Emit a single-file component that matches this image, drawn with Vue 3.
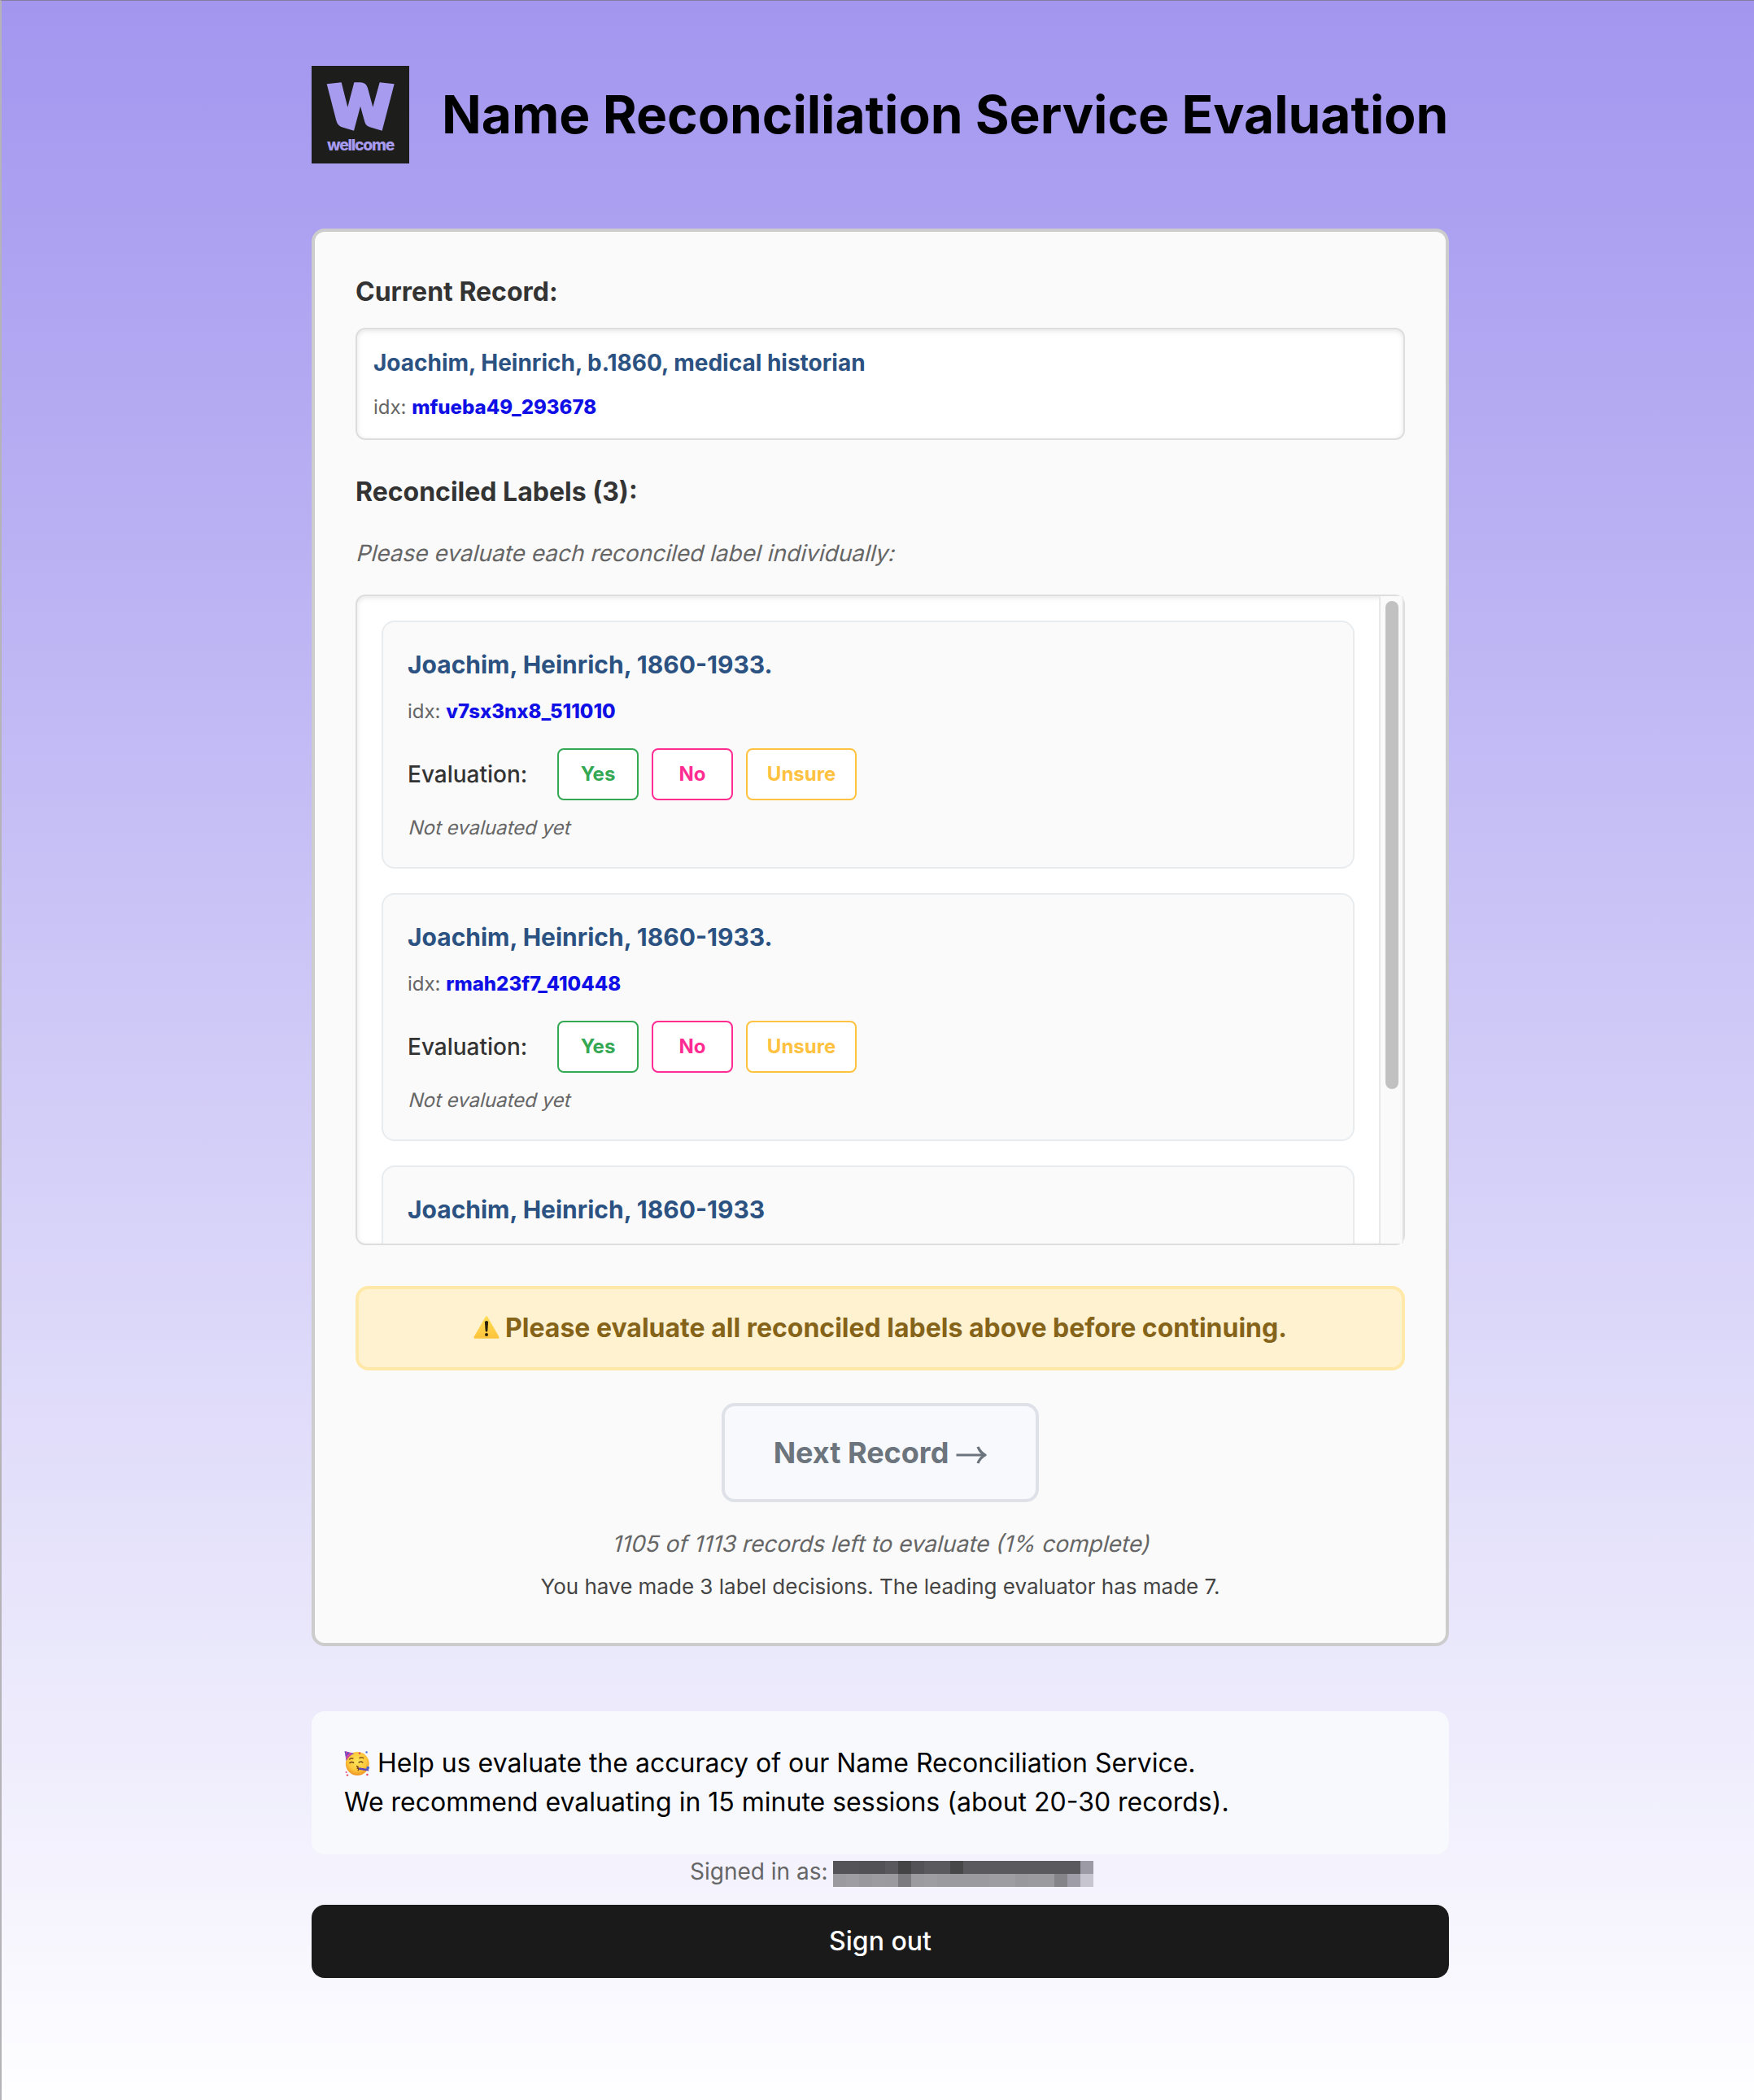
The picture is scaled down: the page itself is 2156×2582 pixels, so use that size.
<script setup>
const record = {
  label: 'Joachim, Heinrich, b.1860, medical historian',
  idx: 'mfueba49_293678',
}

const labels = [
  { label: 'Joachim, Heinrich, 1860-1933.', idx: 'v7sx3nx8_511010' },
  { label: 'Joachim, Heinrich, 1860-1933.', idx: 'rmah23f7_410448' },
  { label: 'Joachim, Heinrich, 1860-1933', idx: '' },
]

const maskTop = [
  '#545358', '#545358', '#525156', '#525156', '#59585d', '#444346', '#535257', '#5a595e', '#5a595e', '#474648',
  '#5a595e', '#5a595e', '#5a595e', '#5a595e', '#5a595e', '#5a595e', '#5a595e', '#5a595e', '#5a595e', '#9c9aa4',
]
const maskBottom = [
  '#9b9a9f', '#9e9da2', '#99989d', '#9c9ba0', '#9b9a9f', '#7c7b80', '#9c9ba0', '#9e9da2', '#9b9a9f', '#9b9a9f',
  '#9b9a9f', '#9b9a9f', '#9e9da2', '#9e9da2', '#99989d', '#9b9a9f', '#9b9a9f', '#858488', '#9f9da8', '#c7c5d0',
]
const mask = [...maskTop, ...maskBottom]
</script>

<template>
  <div class="page">
    <header class="header">
      <svg class="logo" viewBox="39 63 360 360" role="img" aria-label="Wellcome">
        <rect x="39" y="63" width="360" height="360" fill="#1d1d1b" />
        <path
          fill="#a79bf0"
          d="M95 130 L149 124 L172 215 L196 124 H216 Q240 123 246 145 L265 215 L290 124 L344 130 L299 302 L254 289 Q239 284 235 270 L219 212 L195 302 L148 288 Q135 283 130 265 Z"
        />
        <text class="logo-text" x="96" y="374" textLength="250">wellcome</text>
      </svg>
      <h1 class="title">Name Reconciliation Service Evaluation</h1>
    </header>

    <main class="card">
      <h2 class="heading">Current Record:</h2>
      <div class="record">
        <div class="record-label">{{ record.label }}</div>
        <div class="idx">idx: <a>{{ record.idx }}</a></div>
      </div>

      <h2 class="heading labels-heading">Reconciled Labels (3):</h2>
      <p class="hint">Please evaluate each reconciled label individually:</p>

      <div class="list">
        <div class="list-items">
          <article v-for="(item, i) in labels" :key="i" class="item">
            <div class="item-label">{{ item.label }}</div>
            <template v-if="item.idx">
              <div class="idx">idx: <a>{{ item.idx }}</a></div>
              <div class="evaluation">
                <span class="evaluation-name">Evaluation:</span>
                <button class="choice yes">Yes</button>
                <button class="choice no">No</button>
                <button class="choice unsure">Unsure</button>
              </div>
              <div class="status">Not evaluated yet</div>
            </template>
          </article>
        </div>
        <div class="track"><div class="thumb"></div></div>
      </div>

      <div class="warning">
        <svg class="warning-icon" viewBox="0 0 32 28">
          <defs>
            <linearGradient id="warn" x1="0" y1="0" x2="0" y2="1">
              <stop offset="0" stop-color="#ffde55" />
              <stop offset="1" stop-color="#fdc33c" />
            </linearGradient>
          </defs>
          <path d="M14.7 1 Q16 -.6 17.3 1 L31.3 25.5 Q32 27.7 30 27.8 H2 Q0 27.7 .7 25.5 Z" fill="url(#warn)" />
          <path d="M13.9 7.5 Q14 6 16 6 T18.1 7.5 L17.3 18.6 Q17.2 19.6 16 19.6 T14.7 18.6 Z" fill="#2b2107" />
          <circle cx="16" cy="23" r="2" fill="#2b2107" />
        </svg>
        <span class="warning-text">Please evaluate all reconciled labels above before continuing.</span>
      </div>

      <button class="next">
        <span class="next-text">Next Record</span>
        <svg class="arrow" viewBox="0 0 38 22">
          <path d="M.5 11 H34" />
          <path class="head" d="M25.5 1.2 L28.6 .6 Q31 6.6 37.6 10.2 V11.8 Q31 15.4 28.6 21.4 L25.5 20.8 Q27.8 14.4 32.6 11 Q27.8 7.6 25.5 1.2 Z" />
        </svg>
      </button>

      <p class="remaining">1105 of 1113 records left to evaluate (1% complete)</p>
      <p class="decisions">You have made 3 label decisions. The leading evaluator has made 7.</p>
    </main>

    <section class="info">
      <div class="info-first">
        <svg class="party" viewBox="0 0 32 32">
          <defs>
            <radialGradient id="face" cx=".5" cy=".4" r=".6">
              <stop offset="0" stop-color="#ffe75a" />
              <stop offset=".65" stop-color="#fdc73b" />
              <stop offset="1" stop-color="#ee9325" />
            </radialGradient>
          </defs>
          <circle cx="16.3" cy="16.5" r="14.4" fill="url(#face)" />
          <path d="M.5 1 L12.5 4 Q6 6 2.6 13 Z" fill="#6b49c8" />
          <path d="M2 1.4 L4.5 2 L1.8 6 Z M7 2.7 L9.8 3.4 L2.5 12 L2 8 Z" fill="#d04aa0" />
          <path d="M6.2 11.4 Q8.5 9 11.5 10.4 M18.4 9.8 Q21.5 7.8 24.2 10" stroke="#8a5a1c" stroke-width="1.5" fill="none" />
          <path d="M6.5 16 Q9 13 12 15.6 M17.6 15.3 Q20.5 12.6 23.4 15.3" stroke="#6b4218" stroke-width="1.5" fill="none" />
          <path d="M15 19.5 Q18.5 20 16.5 22 Q19 22.8 16.8 25" stroke="#7a3e14" stroke-width="1.5" fill="none" />
          <path d="M18 22.5 L29 24.2 V20" stroke="#5d46b8" stroke-width="2.4" fill="none" />
          <circle cx="29.3" cy="21.6" r="1.8" fill="#4a64d0" />
          <circle cx="19" cy="3.6" r="1.2" fill="#d83b6c" />
          <circle cx="27.6" cy="2.4" r="1.2" fill="#3f6fd6" />
          <circle cx="2.6" cy="27" r="1.1" fill="#e5509b" />
          <circle cx="4" cy="30.6" r="1.2" fill="#e0475d" />
          <circle cx="28.4" cy="30" r="1.2" fill="#e0475d" />
        </svg>
        <span>Help us evaluate the accuracy of our Name Reconciliation Service.</span>
      </div>
      <div>We recommend evaluating in 15 minute sessions (about 20-30 records).</div>
    </section>

    <div class="signed">
      <span class="signed-text">Signed in as:</span>
      <div class="mask">
        <i v-for="(c, i) in mask" :key="i" :style="{ background: c }"></i>
      </div>
    </div>
    <button class="signout">Sign out</button>
  </div>
</template>

<style>
body {
  margin: 0;
}
</style>

<style scoped>
.page {
  box-sizing: border-box;
  width: 2156px;
  height: 2582px;
  padding: 80px 375px 0 381px;
  border-left: 2px solid #b5b3b8;
  border-top: 1px solid #857b9c;
  background: linear-gradient(180deg, #a296ef 0%, #fefeff 100%);
  font-family: Inter, sans-serif;
  color: #333;
  overflow: hidden;
}
button {
  font-family: inherit;
  padding: 0;
  margin: 0;
  box-sizing: border-box;
}
p,
h1,
h2 {
  margin: 0;
}
.header {
  display: flex;
  gap: 40px;
  height: 120px;
  margin-bottom: 80px;
}
.logo {
  width: 120px;
  height: 120px;
  flex: none;
}
.logo-text {
  font-size: 58px;
  font-weight: 800;
  fill: #a79bf0;
}
.title {
  font-size: 64px;
  line-height: 120px;
  font-weight: 700;
  color: #000;
  white-space: nowrap;
}
.card {
  box-sizing: border-box;
  height: 1743px;
  padding: 50px;
  border: 4px solid #ccc;
  border-radius: 16px;
  background: #fafafa;
}
.heading {
  padding-top: 1px;
  font-size: 32px;
  line-height: 46px;
  font-weight: 700;
}
.record {
  box-sizing: border-box;
  height: 138px;
  margin-top: 21px;
  padding: 19px 20px 0;
  border: 2px solid #ddd;
  border-radius: 12px;
  background: #fff;
  box-shadow: inset 0 2px 6px rgba(0, 0, 0, 0.1);
}
.record-label {
  font-size: 28px;
  line-height: 44px;
  font-weight: 700;
  color: #2c5282;
  margin-bottom: 13px;
}
.idx {
  font-size: 24px;
  line-height: 40px;
  color: #666;
}
.idx a {
  color: #0f0fe6;
  font-weight: 800;
}
.labels-heading {
  margin-top: 40px;
}
.hint {
  margin: 30px 0 29px;
  font-size: 28px;
  line-height: 44px;
  color: #666;
  transform: skewX(-14deg);
  transform-origin: 0 32px;
}
.list {
  box-sizing: border-box;
  display: flex;
  height: 800px;
  border: 2px solid #ddd;
  border-radius: 12px;
  background: #fff;
  box-shadow: inset 0 2px 6px rgba(0, 0, 0, 0.1);
}
.list-items {
  flex: 1;
  display: flex;
  flex-direction: column;
  gap: 30px;
  padding: 30px 30px 0;
  overflow: hidden;
}
.item {
  box-sizing: border-box;
  flex: none;
  height: 305px;
  padding: 30px;
  border: 2px solid #e9ecef;
  border-radius: 16px;
  background: #fafafa;
}
.item-label {
  font-size: 30px;
  line-height: 44px;
  font-weight: 700;
  color: #2c5282;
  margin-bottom: 16px;
}
.evaluation {
  display: flex;
  align-items: center;
  gap: 16px;
  margin-top: 25px;
}
.evaluation-name {
  width: 168px;
  font-size: 28px;
  line-height: 64px;
  font-weight: 500;
}
.choice {
  width: 100px;
  height: 64px;
  padding-bottom: 2px;
  border: 2px solid;
  border-radius: 8px;
  background: #fff;
  font-size: 24px;
  font-weight: 700;
}
.yes {
  color: #34a853;
}
.no {
  color: #ff2d92;
}
.unsure {
  width: 136px;
  color: #ffc240;
}
.status {
  margin-top: 16px;
  font-size: 24px;
  line-height: 36px;
  color: #666;
  transform: skewX(-14deg);
  transform-origin: 0 27px;
}
.track {
  box-sizing: border-box;
  flex: none;
  width: 30px;
  padding: 6px;
  border-left: 2px solid #e8e8e8;
  border-right: 2px solid #ededed;
  background: #fafafa;
}
.thumb {
  width: 16px;
  height: 600px;
  border-radius: 8px;
  background: #c1c1c1;
}
.warning {
  box-sizing: border-box;
  display: flex;
  justify-content: center;
  align-items: center;
  gap: 7px;
  height: 104px;
  margin-top: 50px;
  padding-bottom: 2px;
  border: 4px solid #ffe8a8;
  border-radius: 16px;
  background: #fff2d1;
  color: #856319;
  font-size: 32px;
  font-weight: 700;
}
.warning-icon {
  width: 32px;
  height: 28px;
}
.next {
  display: flex;
  justify-content: center;
  align-items: center;
  gap: 9px;
  width: 390px;
  height: 122px;
  margin: 40px auto 0;
  border: 4px solid #dee2e8;
  border-radius: 16px;
  background: #f8f9fc;
  color: #6c757d;
  font-size: 36px;
  font-weight: 700;
}
.arrow {
  width: 38px;
  height: 22px;
  margin-top: 5px;
}
.arrow path {
  fill: none;
  stroke: #6c757d;
  stroke-width: 3;
}
.arrow .head {
  fill: #6c757d;
  stroke: none;
}
.remaining {
  margin-top: 29px;
  font-size: 28px;
  line-height: 44px;
  text-align: center;
  color: #666;
  transform: skewX(-14deg);
  transform-origin: 0 32px;
}
.decisions {
  margin-top: 11px;
  font-size: 26px;
  line-height: 39px;
  text-align: center;
  color: #444;
}
.info {
  box-sizing: border-box;
  height: 176px;
  margin-top: 80px;
  padding: 40px;
  border-radius: 16px;
  background: #f8f9fc;
  color: #000;
  font-size: 32px;
  line-height: 48px;
}
.info-first {
  display: flex;
  align-items: center;
  gap: 9px;
}
.party {
  width: 32px;
  height: 32px;
}
.signed {
  display: flex;
  align-items: flex-start;
  height: 62px;
  padding-left: 465px;
  font-size: 28px;
  line-height: 42px;
  color: #666;
}
.signed-text {
  width: 176px;
  white-space: nowrap;
}
.mask {
  display: grid;
  grid-template-columns: repeat(20, 16px);
  grid-auto-rows: 16px;
  margin-top: 8px;
}
.signout {
  display: block;
  width: 100%;
  height: 90px;
  padding-bottom: 2px;
  border: 0;
  border-radius: 16px;
  background: #1a1a1a;
  color: #fff;
  font-size: 32px;
  font-weight: 500;
}
</style>
